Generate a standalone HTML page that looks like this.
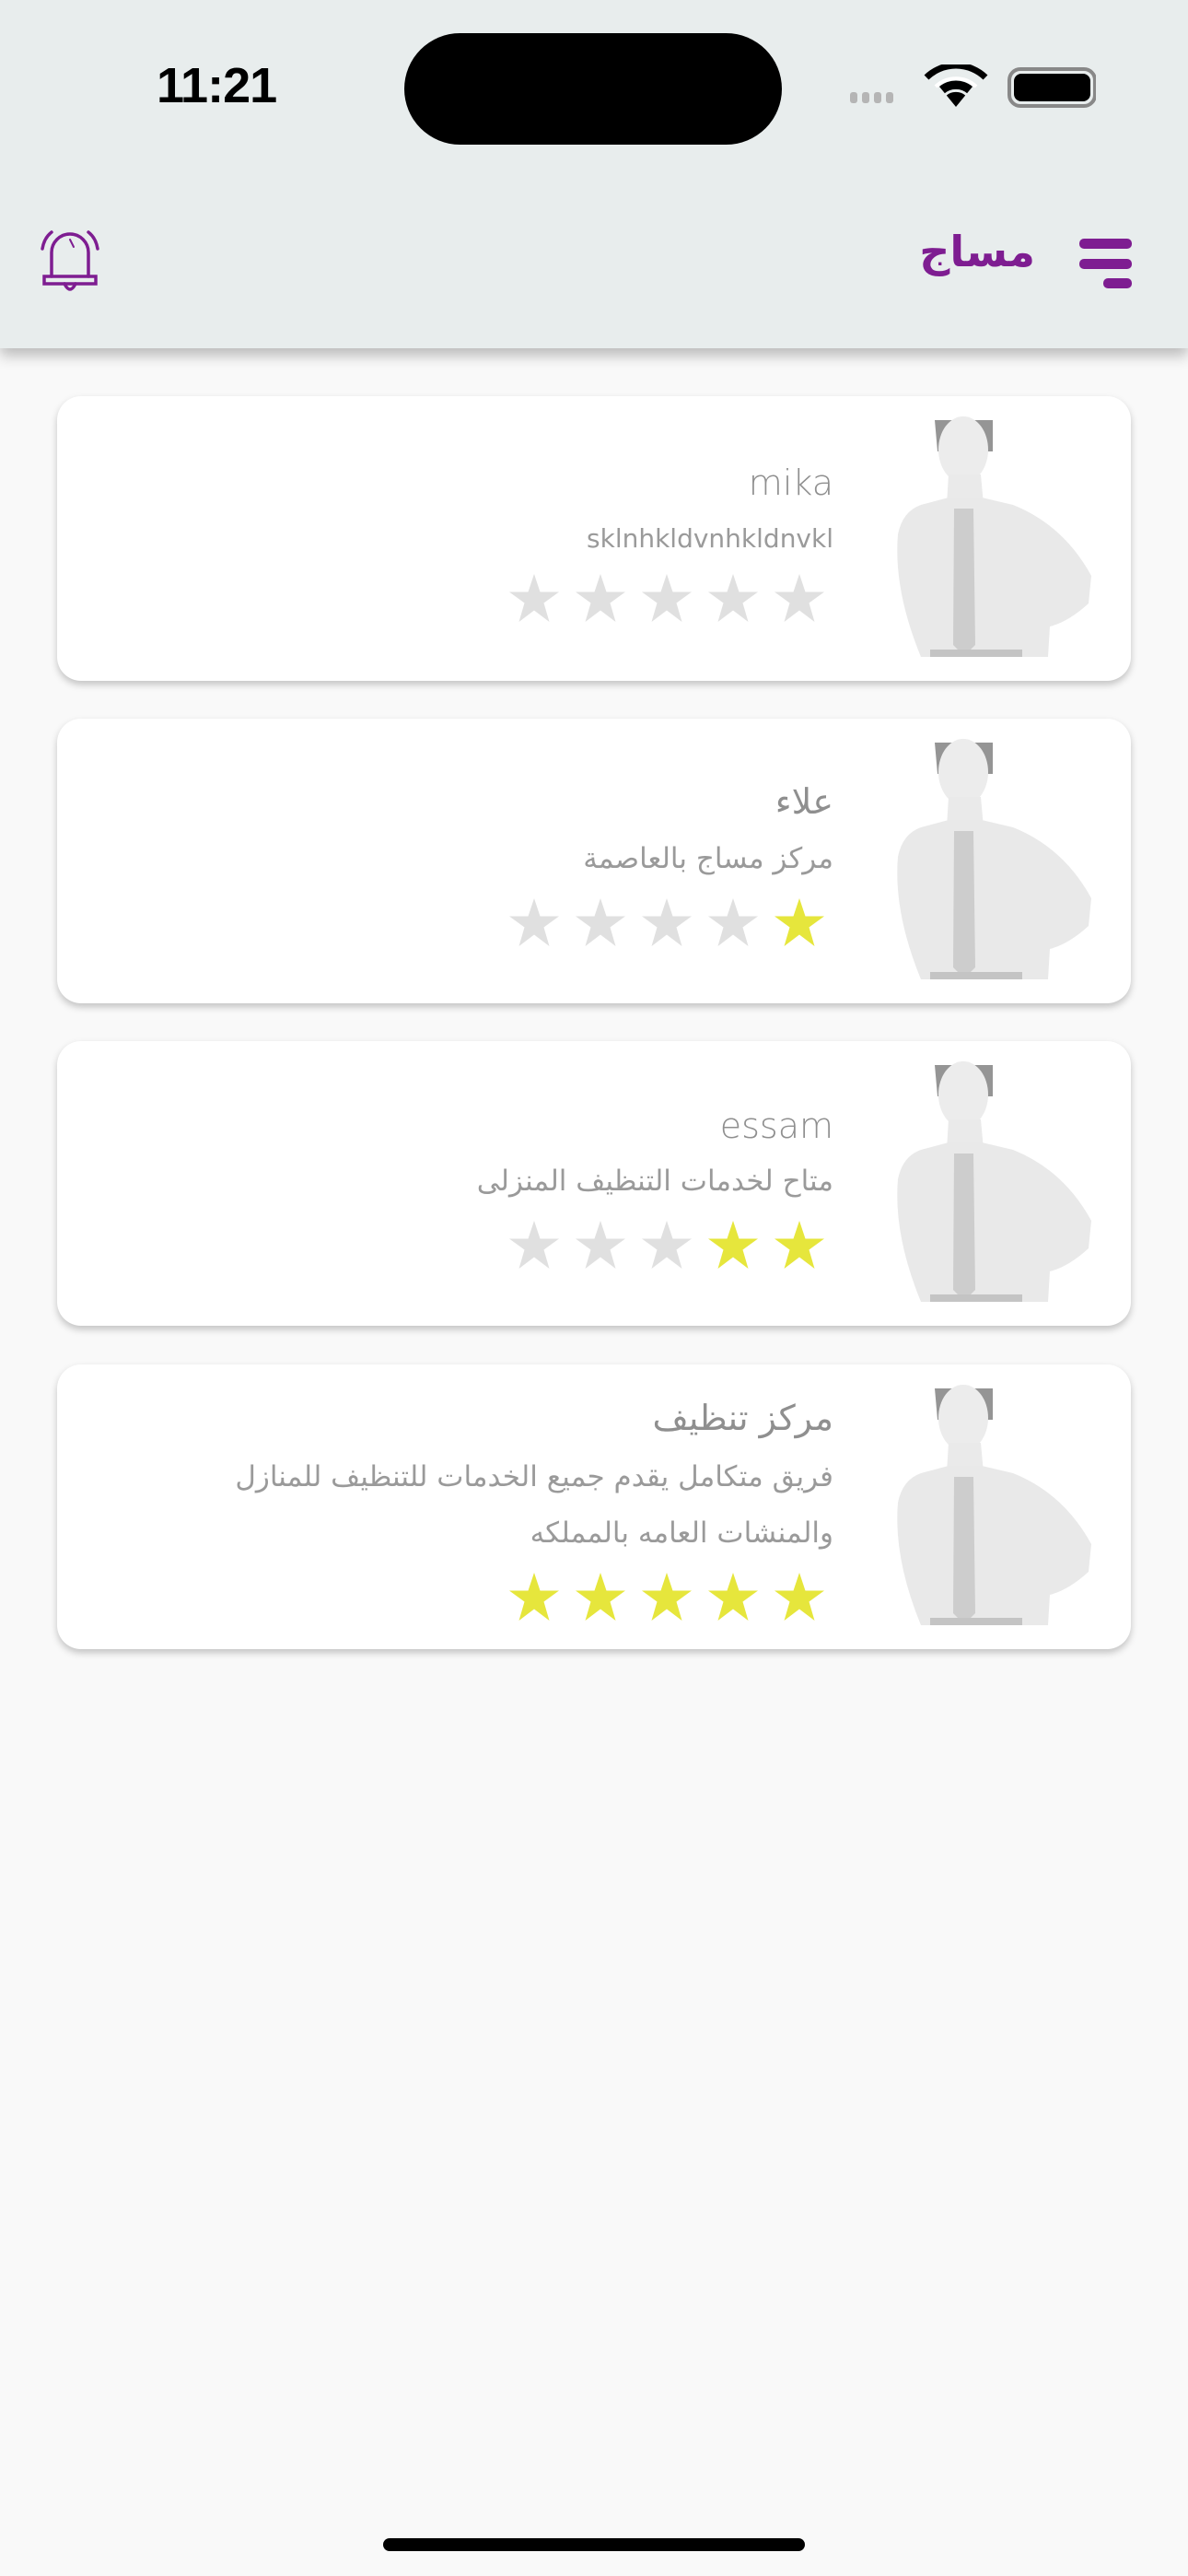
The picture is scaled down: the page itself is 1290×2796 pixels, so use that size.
<!DOCTYPE html>
<html><head><meta charset="utf-8"><style>
*{margin:0;padding:0;box-sizing:border-box}
body{width:1290px;height:2796px;background:#f9f9f9;position:relative;overflow:hidden;font-family:"Liberation Sans","DejaVu Sans",sans-serif}
.hdr{position:absolute;left:0;top:0;width:1290px;height:378px;background:#e8eded;box-shadow:0 8px 14px rgba(0,0,0,.25)}
.time{position:absolute;left:170px;top:62px;font-size:54px;font-weight:bold;color:#000;letter-spacing:-1px}
.island{position:absolute;left:439px;top:36px;width:410px;height:121px;border-radius:61px;background:#000}
.card{position:absolute;left:62px;width:1166px;height:309px;background:#fff;border-radius:26px;box-shadow:0 4px 8px rgba(0,0,0,.22)}
.p{position:absolute;left:898px;top:10px}
.name{position:absolute;right:323px;font-size:38px;color:#8f8f8f;direction:rtl;white-space:nowrap;font-family:"DejaVu Sans",sans-serif;font-weight:300}
.desc{position:absolute;right:323px;font-size:31px;color:#9a9a9a;direction:rtl;white-space:nowrap;font-family:"DejaVu Sans",sans-serif}
.stars{position:absolute;left:491px}
.home{position:absolute;left:416px;top:2755px;width:458px;height:14px;border-radius:7px;background:#000}
</style></head><body>
<div class="hdr">
 <div class="time">11:21</div>
 <div class="island"></div>
 <svg style="position:absolute;left:920px;top:70px" width="270" height="50" viewBox="0 0 270 50">
  <g fill="#b5b5b5"><rect x="3" y="30" width="8" height="12" rx="3"/><rect x="16" y="30" width="8" height="12" rx="3"/><rect x="29" y="30" width="8" height="12" rx="3"/><rect x="42" y="30" width="8" height="12" rx="3"/></g>
  <path d="M118 46 L100 24 A28 28 0 0 1 136 24 Z" fill="#000"/>
  <path d="M86 14 A46 46 0 0 1 150 14" stroke="#000" stroke-width="7" fill="none"/>
  <path d="M96 24 A32 32 0 0 1 140 24" stroke="#fff" stroke-width="4" fill="none"/>
  <path d="M106 33 A18 18 0 0 1 130 33" stroke="#e8eded" stroke-width="3" fill="none"/>
  <rect x="176" y="5" width="93" height="40" rx="12" fill="none" stroke="#888" stroke-width="4"/>
  <rect x="181" y="10" width="83" height="30" rx="8" fill="#000"/>
 </svg>
 <svg style="position:absolute;left:42px;top:248px" width="68" height="74" viewBox="0 0 68 74" fill="none" stroke="#7e1d91" stroke-width="3.5" stroke-linecap="round">
  <path d="M14 52 L14 26 A20 20 0 0 1 54 26 L54 52"/>
  <path d="M6 52 H62 V60 H6 Z"/>
  <path d="M28 60 Q34 72 40 60"/>
  <path d="M4 22 Q6 10 14 4"/><path d="M64 22 Q62 10 54 4"/>
  <path d="M34 12 L38 20" stroke-width="2"/>
 </svg>
 <div style="position:absolute;right:166px;top:246px;font-size:46px;font-weight:bold;color:#7e1d91;font-family:'DejaVu Sans',sans-serif;direction:rtl">مساج</div>
 <div style="position:absolute;left:1172px;top:259px;width:57px;height:11px;border-radius:5px;background:#7e1d91"></div>
 <div style="position:absolute;left:1172px;top:281px;width:57px;height:11px;border-radius:5px;background:#7e1d91"></div>
 <div style="position:absolute;left:1198px;top:302px;width:31px;height:11px;border-radius:5px;background:#7e1d91"></div>
</div>

<svg width="0" height="0" style="position:absolute">
 <defs>
  <g id="person">
   <path d="M55 16 H118 L118 50 L58 50 Z" fill="#959595"/>
   <ellipse cx="86" cy="48" rx="27" ry="36" fill="#ececec"/>
   <path d="M70 75 H105 L108 108 H68 Z" fill="#eaeaea"/>
   <path d="M40 108 L70 100 H106 L140 108 Q195 130 225 185 L222 215 Q200 235 180 240 L178 273 L40 273 Q10 200 15 140 Q20 115 40 108 Z" fill="#e9e9e9"/>
   <path d="M76 112 H97 L99 260 L87 272 L75 260 Z" fill="#cdcdcd"/>
   <rect x="50" y="265" width="100" height="8" fill="#c4c4c4"/>
  </g>
  <path id="st" d="M27 0 L33.5 19.5 L54 19.5 L37.5 31.5 L43.5 52 L27 39.5 L10.5 52 L16.5 31.5 L0 19.5 L20.5 19.5 Z"/>
 </defs>
</svg>

<div class="card" style="top:430px">
 <svg class="p" width="240" height="290"><use href="#person"/></svg>
 <div class="name" style="top:72px">mika</div>
 <div class="desc" style="top:138px;font-size:28px">sklnhkldvnhkldnvkl</div>
 <svg class="stars" style="top:193px" width="350" height="56"><g fill="#e0e0e0"><use href="#st" x="0"/><use href="#st" x="72"/><use href="#st" x="144"/><use href="#st" x="216"/><use href="#st" x="288"/></g></svg>
</div>
<div class="card" style="top:780px">
 <svg class="p" width="240" height="290"><use href="#person"/></svg>
 <div class="name" style="top:68px">علاء</div>
 <div class="desc" style="top:134px">مركز مساج بالعاصمة</div>
 <svg class="stars" style="top:195px" width="350" height="56"><g fill="#e0e0e0"><use href="#st" x="0"/><use href="#st" x="72"/><use href="#st" x="144"/><use href="#st" x="216"/></g><use href="#st" x="288" fill="#e6e63c"/></svg>
</div>
<div class="card" style="top:1130px">
 <svg class="p" width="240" height="290"><use href="#person"/></svg>
 <div class="name" style="top:70px">essam</div>
 <div class="desc" style="top:134px">متاح لخدمات التنظيف المنزلى</div>
 <svg class="stars" style="top:195px" width="350" height="56"><g fill="#e0e0e0"><use href="#st" x="0"/><use href="#st" x="72"/><use href="#st" x="144"/></g><g fill="#e6e63c"><use href="#st" x="216"/><use href="#st" x="288"/></g></svg>
</div>
<div class="card" style="top:1481px">
 <svg class="p" width="240" height="290"><use href="#person"/></svg>
 <div class="name" style="top:36px">مركز تنظيف</div>
 <div class="desc" style="top:104px">فريق متكامل يقدم جميع الخدمات للتنظيف للمنازل</div>
 <div class="desc" style="top:165px">والمنشات العامه بالمملكه</div>
 <svg class="stars" style="top:226px" width="350" height="56"><g fill="#e6e63c"><use href="#st" x="0"/><use href="#st" x="72"/><use href="#st" x="144"/><use href="#st" x="216"/><use href="#st" x="288"/></g></svg>
</div>

<div class="home"></div>
</body></html>
